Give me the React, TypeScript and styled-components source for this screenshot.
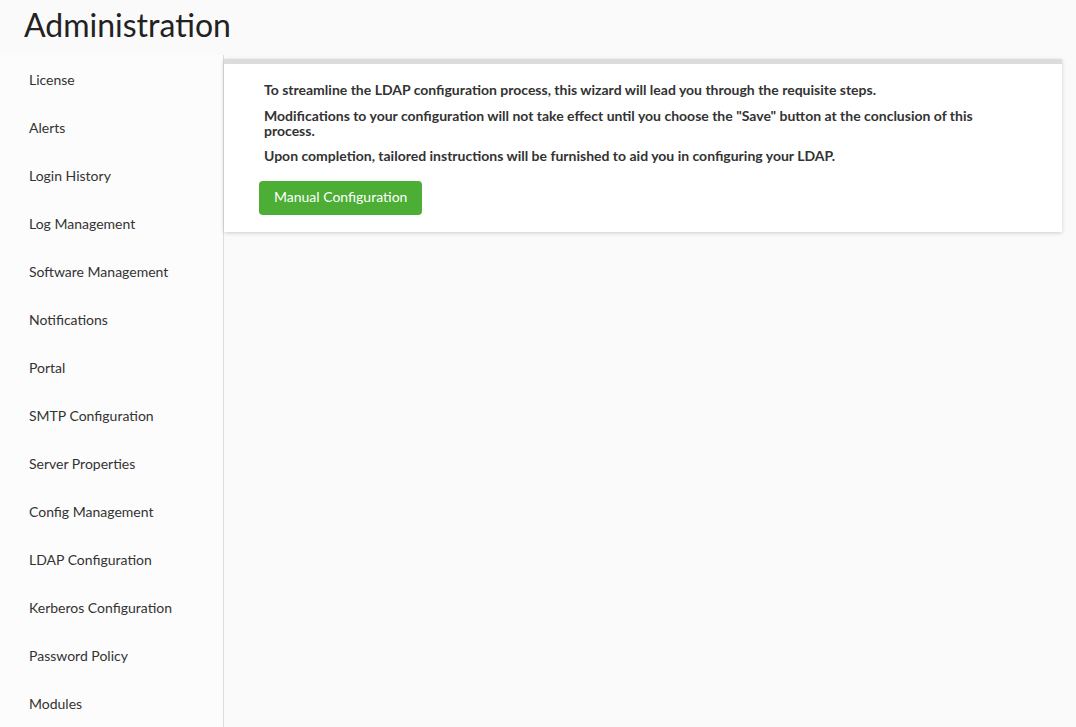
import React from "react";
import styled, { createGlobalStyle } from "styled-components";

const Global = createGlobalStyle`
  html, body { margin: 0; padding: 0; background: #fafafa; }
  body { font-family: Lato, "Open Sans", sans-serif; color: #333; }
  * { box-sizing: border-box; }
`;

const Page = styled.div`
  display: flex;
  flex-direction: column;
  min-height: 727px;
  background: #fafafa;
`;

const Title = styled.h1`
  margin: 0;
  height: 55px;
  padding: 6px 0 0 24px;
  font-size: 32px;
  font-weight: 400;
  line-height: 1.2;
  color: #222;
`;

const Body = styled.div`
  display: flex;
  flex: 1;
`;

const Sidebar = styled.nav`
  width: 224px;
  flex-shrink: 0;
  border-right: 1px solid #dddddd;
  background: #fcfcfc;
  display: flex;
  flex-direction: column;
`;

const NavItem = styled.div`
  height: 48px;
  display: flex;
  align-items: center;
  padding-left: 29px;
  font-size: 14px;
  color: #333;
`;

const Main = styled.main`
  flex: 1;
  padding: 4px 14px 0 0;
`;

const Card = styled.section`
  background: #fff;
  border-top: 5px solid #dcdcdc;
  box-shadow: 0 1px 4px rgba(0, 0, 0, 0.18);
  padding: 18px 41px 17px 35px;
`;

const Para = styled.p`
  margin: 0 0 10.5px;
  padding-left: 5px;
  font-size: 14px;
  font-weight: 700;
  line-height: 15px;
  color: #333;
`;

const Button = styled.button`
  margin-top: 7px;
  height: 34px;
  padding: 0 15px 2px;
  border: none;
  border-radius: 4px;
  background: #4cae34;
  color: #fff;
  font-family: Lato, sans-serif;
  font-size: 14px;
  cursor: pointer;
`;

const items = [
  "License",
  "Alerts",
  "Login History",
  "Log Management",
  "Software Management",
  "Notifications",
  "Portal",
  "SMTP Configuration",
  "Server Properties",
  "Config Management",
  "LDAP Configuration",
  "Kerberos Configuration",
  "Password Policy",
  "Modules",
];

export default function App() {
  return (
    <Page>
      <Global />
      <Title>Administration</Title>
      <Body>
        <Sidebar>
          {items.map((i) => (
            <NavItem key={i}>{i}</NavItem>
          ))}
        </Sidebar>
        <Main>
          <Card>
            <Para>To streamline the LDAP configuration process, this wizard will lead you through the requisite steps.</Para>
            <Para>Modifications to your configuration will not take effect until you choose the "Save" button at the conclusion of this process.</Para>
            <Para>Upon completion, tailored instructions will be furnished to aid you in configuring your LDAP.</Para>
            <Button>Manual Configuration</Button>
          </Card>
        </Main>
      </Body>
    </Page>
  );
}
